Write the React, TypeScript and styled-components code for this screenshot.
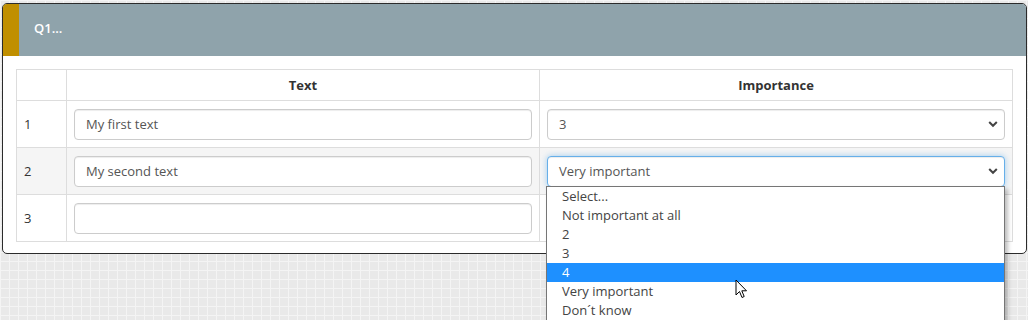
import React from "react";
import styled, { createGlobalStyle } from "styled-components";

const Global = createGlobalStyle`
  html, body { margin: 0; padding: 0; }
  body {
    font-family: "Open Sans", "Liberation Sans", sans-serif;
    font-size: 13px;
    color: #333;
    background-color: #e9e9e9;
    background-image:
      linear-gradient(to right, #f4f4f4 1px, transparent 1px),
      linear-gradient(to bottom, #f4f4f4 1px, transparent 1px);
    background-size: 9px 9px;
    height: 320px;
    overflow: hidden;
  }
`;

const Page = styled.div`
  padding: 3px 1px 0 2px;
  position: relative;
`;

const Card = styled.div`
  border: 1px solid #2b2b2b;
  border-radius: 5px;
  background: #fff;
`;

const Header = styled.div`
  display: flex;
  height: 52px;
  background: #8fa3ab;
  border-radius: 4px 4px 0 0;
  overflow: hidden;
`;

const Accent = styled.div`
  width: 16px;
  background: #c08f00;
`;

const Title = styled.div`
  display: flex;
  align-items: center;
  padding-left: 15px;
  color: #fff;
  font-weight: 600;
  font-size: 13px;
  padding-bottom: 5px;
`;

const Body = styled.div`
  padding: 13px 13px 11px 13px;
`;

const Table = styled.table`
  width: 100%;
  border-collapse: collapse;
  table-layout: fixed;
`;

const NumCol = styled.col`
  width: 50px;
`;

const Th = styled.th`
  border: 1px solid #dddddd;
  height: 30px;
  padding: 0 8px;
  font-weight: 700;
  text-align: center;
  color: #333;
`;

const Tr = styled.tr<{ $striped?: boolean }>`
  background: ${(p) => (p.$striped ? "#f5f5f5" : "#fff")};
`;

const Td = styled.td`
  border: 1px solid #dddddd;
  height: 46px;
  padding: 0 7px;
  vertical-align: middle;
  color: #333;
`;

const Input = styled.div`
  box-sizing: border-box;
  height: 31px;
  border: 1px solid #cccccc;
  border-radius: 4px;
  background: #fff;
  display: flex;
  align-items: center;
  padding: 0 11px;
  color: #555;
  box-shadow: inset 0 1px 1px rgba(0, 0, 0, 0.075);
`;

const SelectWrap = styled.div`
  position: relative;
`;

const SelectBox = styled(Input)<{ $focus?: boolean }>`
  justify-content: space-between;
  padding-right: 6px;
  ${(p) =>
    p.$focus
      ? `border-color: #66afe9; box-shadow: inset 0 1px 1px rgba(0,0,0,.075), 0 0 6px rgba(102,175,233,.6);`
      : ""}
`;

const Chevron = () => (
  <svg width="10" height="8" viewBox="0 0 10 8">
    <path d="M1.2 2 L5 5.8 L8.8 2" fill="none" stroke="#444" strokeWidth="2" />
  </svg>
);

const List = styled.div`
  position: absolute;
  left: -1px;
  right: 0;
  top: 30px;
  box-sizing: border-box;
  border: 1px solid #767676;
  background: #fff;
  box-shadow: 3px 3px 4px rgba(0, 0, 0, 0.25);
  z-index: 5;
  padding-bottom: 8px;
`;

const Option = styled.div<{ $active?: boolean }>`
  height: 19px;
  line-height: 19px;
  padding-left: 15px;
  color: ${(p) => (p.$active ? "#fff" : "#444")};
  background: ${(p) => (p.$active ? "#1e90ff" : "transparent")};
  white-space: nowrap;
`;

const Cursor = styled.svg`
  position: absolute;
  left: 735px;
  top: 279px;
  z-index: 10;
`;

const options = ["Select...", "Not important at all", "2", "3", "4", "Very important", "Don´t know"];

export default function App() {
  return (
    <>
      <Global />
      <Page>
        <Card>
          <Header>
            <Accent />
            <Title>Q1...</Title>
          </Header>
          <Body>
            <Table>
              <colgroup>
                <NumCol />
                <col />
                <col />
              </colgroup>
              <thead>
                <tr>
                  <Th></Th>
                  <Th>Text</Th>
                  <Th>Importance</Th>
                </tr>
              </thead>
              <tbody>
                <Tr>
                  <Td>1</Td>
                  <Td>
                    <Input>My first text</Input>
                  </Td>
                  <Td>
                    <SelectBox>
                      <span>3</span>
                      <Chevron />
                    </SelectBox>
                  </Td>
                </Tr>
                <Tr $striped>
                  <Td>2</Td>
                  <Td>
                    <Input>My second text</Input>
                  </Td>
                  <Td>
                    <SelectWrap>
                      <SelectBox $focus>
                        <span>Very important</span>
                        <Chevron />
                      </SelectBox>
                      <List>
                        {options.map((o) => (
                          <Option key={o} $active={o === "4"}>
                            {o}
                          </Option>
                        ))}
                      </List>
                    </SelectWrap>
                  </Td>
                </Tr>
                <Tr>
                  <Td>3</Td>
                  <Td>
                    <Input />
                  </Td>
                  <Td>
                    <SelectBox>
                      <span></span>
                      <Chevron />
                    </SelectBox>
                  </Td>
                </Tr>
              </tbody>
            </Table>
          </Body>
        </Card>
        <Cursor width="14" height="21" viewBox="0 0 14 21">
          <path
            d="M1 1 L1 16 L4.5 12.5 L7 18.5 L9.2 17.5 L6.8 11.8 L11.5 11.8 Z"
            fill="#fff"
            stroke="#000"
            strokeWidth="1"
          />
        </Cursor>
      </Page>
    </>
  );
}
